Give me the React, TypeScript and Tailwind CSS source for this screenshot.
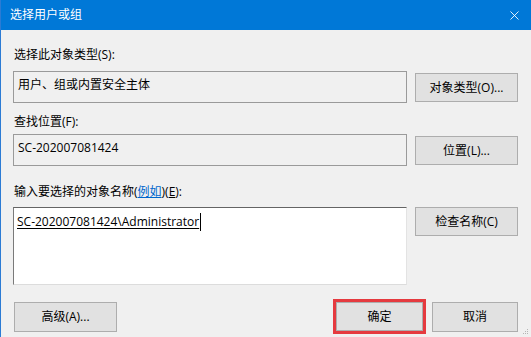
import { X } from "lucide-react";

const font = { fontFamily: '"Open Sans", "Noto Sans CJK SC", sans-serif' };

const Button = ({ label, className = "" }: { label: React.ReactNode; className?: string }) => (
  <button
    className={`h-[29px] bg-[#e1e1e1] border border-[#adadad] text-[12px] text-black flex items-center justify-center ${className}`}
  >
    {label}
  </button>
);

const ReadBox = ({ text }: { text: string }) => (
  <div className="w-[394px] h-[32px] border border-[#9a9a9a] bg-[#f0f0f0] px-[4px] pt-[5px] text-[12px] leading-[16px] text-black">
    {text}
  </div>
);

export default function App() {
  return (
    <div
      className="w-[531px] h-[337px] bg-[#f0f0f0] border-l border-[#2b7bd4] flex flex-col relative overflow-hidden"
      style={font}
    >
      <div className="h-[30px] bg-[#0078d7] flex items-center justify-between pl-[9px] pr-[9px] shrink-0">
        <span className="text-white text-[12px] leading-[16px]">选择用户或组</span>
        <X className="w-[15px] h-[15px] text-white" strokeWidth={1.4} />
      </div>

      <div className="flex flex-col pl-[12px]">
        <div className="mt-[17px] h-[16px] text-[12px] leading-[16px] pl-[1px]">选择此对象类型(S):</div>
        <div className="mt-[8px] flex items-start gap-[8px]">
          <ReadBox text="用户、组或内置安全主体" />
          <Button label="对象类型(O)..." className="w-[103px] mt-[2px]" />
        </div>

        <div className="mt-[11px] h-[16px] text-[12px] leading-[16px] pl-[1px]">查找位置(F):</div>
        <div className="mt-[4px] flex items-start gap-[8px]">
          <ReadBox text="SC-202007081424" />
          <Button label="位置(L)..." className="w-[103px] mt-[2px]" />
        </div>

        <div className="mt-[18px] h-[16px] text-[12px] leading-[16px] pl-[1px]">
          输入要选择的对象名称(
          <span className="text-[#0066cc] underline">例如</span>
          )(<span className="underline">E</span>):
        </div>
        <div className="mt-[7px] flex items-start gap-[8px]">
          <div className="w-[394px] h-[78px] bg-white border border-t-[#646464] border-l-[#7a7a7a] border-r-[#e3e3e3] border-b-[#dcdcdc] pl-[3px] pt-[5px]">
            <div className="flex items-center text-[12px] leading-[16px] text-black">
              <span className="underline underline-offset-2">SC-202007081424\Administrator</span>
              <span className="w-px h-[18px] bg-black ml-[1px]" />
            </div>
          </div>
          <Button label="检查名称(C)" className="w-[103px]" />
        </div>

        <div className="mt-[14px] flex items-center">
          <Button label="高级(A)..." className="w-[103px] h-[30px] ml-[1px]" />
          <div className="ml-[216px] border-[3px] border-[#e53a3f] p-0">
            <Button label="确定" className="w-[87px] h-[26px]" />
          </div>
          <Button label="取消" className="w-[86px] h-[30px] ml-[6px]" />
        </div>
      </div>

      <svg className="absolute right-[2px] bottom-[2px]" width="6" height="6" viewBox="0 0 6 6">
        <rect x="4" y="0" width="1" height="1" fill="#b5b5b5" />
        <rect x="2" y="2" width="1" height="1" fill="#b5b5b5" />
        <rect x="4" y="2" width="1" height="1" fill="#b5b5b5" />
        <rect x="0" y="4" width="1" height="1" fill="#b5b5b5" />
        <rect x="2" y="4" width="1" height="1" fill="#b5b5b5" />
        <rect x="4" y="4" width="1" height="1" fill="#b5b5b5" />
      </svg>
    </div>
  );
}
